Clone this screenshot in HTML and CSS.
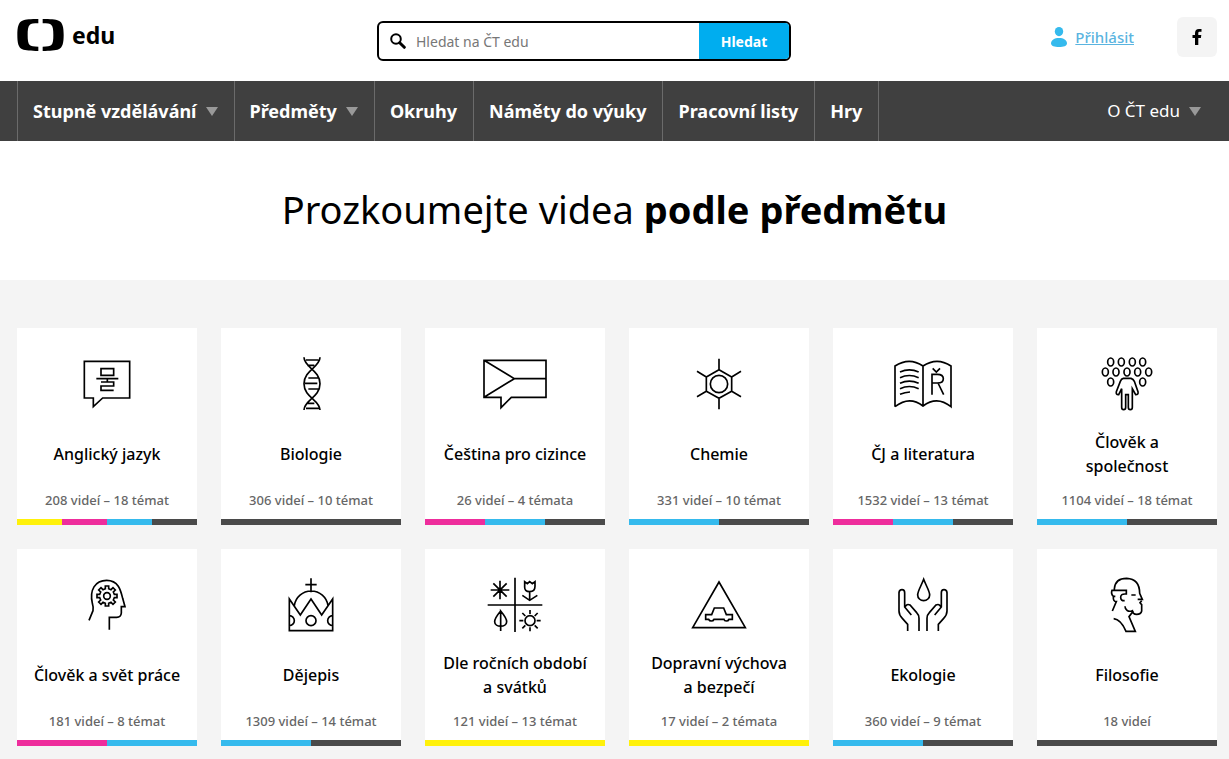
FILE: index.html
```html
<!DOCTYPE html>
<html lang="cs">
<head>
<meta charset="utf-8">
<meta name="viewport" content="width=device-width, initial-scale=1">
<title>ČT edu</title>
<link rel="stylesheet" href="styles.css">
</head>
<body>
<header class="header wrap">
  <a class="logo" href="#">
    <svg class="logo-mark" viewBox="51 57 139 96" aria-hidden="true">
      <path id="bracket" d="M114 57C92 57 75 58 66 62C54 67 51 82 51 105S54 143 66 148C75 152 92 153 114 153V140C100 140 92 139 88 135C83 130 82 120 82 105S83 80 88 75C92 71 100 70 114 70Z"/>
      <use href="#bracket" transform="translate(241 0) scale(-1 1)"/>
    </svg>
    <span>edu</span>
  </a>
  <form class="search" role="search">
    <svg class="search-icon" viewBox="0 0 16 16" aria-hidden="true"><circle cx="6" cy="6" r="4.8" fill="none" stroke="#000" stroke-width="2"/><path d="M9.7 9.7L14.3 14.3" stroke="#000" stroke-width="3" stroke-linecap="round"/></svg>
    <input class="search-input" type="search" placeholder="Hledat na ČT edu" aria-label="Hledat na ČT edu">
    <button class="search-button" type="submit">Hledat</button>
  </form>
  <div class="account">
    <a class="login" href="#">
      <svg class="login-icon" viewBox="0 0 16 20" aria-hidden="true"><ellipse cx="8" cy="4.6" rx="4.2" ry="4.6"/><path d="M8 11C12.500 11 16 13 16 16.500C16 19 12.500 20 8 20S0 19 0 16.500C0 13 3.500 11 8 11Z"/></svg>
      <span>Přihlásit</span>
    </a>
    <a class="facebook" href="#" aria-label="Facebook">
      <svg class="facebook-icon" viewBox="0 0 10 16" aria-hidden="true"><path d="M3 16V9H.5V6H3V4.200C3 1.500 4.400 0 7 0H9.500V2.800H7.800C6.700 2.800 6.300 3.300 6.300 4.200V6H9.300L8.900 9H6.300V16Z"/></svg>
    </a>
  </div>
</header>

<nav class="nav">
  <div class="nav-inner wrap">
    <ul class="menu">
      <li><button class="menu-item" type="button">Stupně vzdělávání<span class="arrow"></span></button></li>
      <li><button class="menu-item" type="button">Předměty<span class="arrow"></span></button></li>
      <li><a class="menu-item" href="#">Okruhy</a></li>
      <li><a class="menu-item" href="#">Náměty do výuky</a></li>
      <li><a class="menu-item" href="#">Pracovní listy</a></li>
      <li><a class="menu-item" href="#">Hry</a></li>
    </ul>
    <button class="menu-item menu-about" type="button">O ČT edu<span class="arrow"></span></button>
  </div>
</nav>

<main>
  <h1 class="title">Prozkoumejte videa <strong>podle předmětu</strong></h1>
  <section class="subjects">
    <div class="grid wrap">
      <a class="card" href="#">
        <svg class="icon" viewBox="201 72 240 240" aria-hidden="true"><path d="M253 124H389V234H308L280 260V234H253ZM303 146H341V166H303ZM289 176H355M322 176V186M303 186H341V198H303V211H341"/></svg>
        <h2 class="name">Anglický jazyk</h2><p class="count">208 videí – 18 témat</p>
        <span class="bar"><i class="yellow"></i><i class="pink"></i><i class="blue"></i><i class="dark"></i></span>
      </a>
      <a class="card" href="#">
        <svg class="icon" viewBox="813 72 240 240" aria-hidden="true"><path d="M912 112C912 142 960 150 960 191S912 240 912 270M960 112C960 142 912 150 912 191S960 240 960 270M918 120H955M922 136H943M925 174H955M915 190H952M925 207H957M920 250H943M918 265H957"/></svg>
        <h2 class="name">Biologie</h2><p class="count">306 videí – 10 témat</p>
        <span class="bar"><i class="dark"></i></span>
      </a>
      <a class="card" href="#">
        <svg class="icon" viewBox="195 72 240 240" aria-hidden="true"><path d="M222 121H408V232H304L273 263V232H222ZL313 176H408M313 176L222 232"/></svg>
        <h2 class="name">Čeština pro cizince</h2><p class="count">26 videí – 4 témata</p>
        <span class="bar"><i class="pink"></i><i class="blue"></i><i class="dark"></i></span>
      </a>
      <a class="card" href="#">
        <svg class="icon" viewBox="807 72 240 240" aria-hidden="true"><path d="M927 149L965 171V214L927 235L889 214V171ZM927 149V116M965 171L993 154M965 214L993 230M927 235V268M889 214L861 230M889 171L861 154"/><circle cx="927" cy="192" r="26"/></svg>
        <h2 class="name">Chemie</h2><p class="count">331 videí – 10 témat</p>
        <span class="bar"><i class="blue"></i><i class="dark"></i></span>
      </a>
      <a class="card" href="#">
        <svg class="icon" viewBox="189 72 240 240" aria-hidden="true"><path d="M225 260V138Q268 110 309 138Q351 110 393 138V260Q351 226 309 258Q268 226 225 260M309 138V258M240 156Q268 143 296 156M240 173Q268 160 296 173M240 190Q268 177 296 190M240 206Q268 193 296 206M240 223Q255 217 270 216M336 224V163H352Q370 163 370 176T352 189H336M354 189L371 224M338 145L349 156L360 145"/></svg>
        <h2 class="name">ČJ a literatura</h2><p class="count">1532 videí – 13 témat</p>
        <span class="bar"><i class="pink"></i><i class="blue"></i><i class="dark"></i></span>
      </a>
      <a class="card" href="#">
        <svg class="icon" viewBox="801 72 240 240" aria-hidden="true"><g><ellipse cx="872" cy="126" rx="9" ry="12"/><ellipse cx="904" cy="126" rx="9" ry="12"/><ellipse cx="937" cy="126" rx="9" ry="12"/><ellipse cx="968" cy="126" rx="9" ry="12"/><ellipse cx="856" cy="156" rx="9" ry="12"/><ellipse cx="888" cy="156" rx="9" ry="12"/><ellipse cx="921" cy="156" rx="9" ry="12"/><ellipse cx="953" cy="156" rx="9" ry="12"/><ellipse cx="986" cy="156" rx="9" ry="12"/><ellipse cx="872" cy="186" rx="9" ry="12"/><ellipse cx="968" cy="186" rx="9" ry="12"/></g><path d="M910 175H933Q940 177 943 184L954 215Q956 224 947 224L937 206V262Q937 269 931 269T925 262V224H917V262Q917 269 911 269T905 262V206L896 224Q887 225 889 215L901 184Q904 176 910 175Z"/></svg>
        <h2 class="name">Člověk a společnost</h2><p class="count">1104 videí – 18 témat</p>
        <span class="bar"><i class="blue"></i><i class="dark"></i></span>
      </a>
      <a class="card" href="#">
        <svg class="icon" viewBox="201 0 240 240" aria-hidden="true"><path d="M267 166L279 137Q281 128 277 115C268 75 285 46 320 46S362 75 368 100L375 125H364V144Q363 157 350 157H328V194"/><g transform="translate(321 93)"><circle r="10"/><path d="M-5 -22V-30H5V-22L12 -19L18 -25L25 -18L19 -12L22 -5H30V5H22L19 12L25 18L18 25L12 19L5 22V30H-5V22L-12 19L-18 25L-25 18L-19 12L-22 5H-30V-5H-22L-19 -12L-25 -18L-18 -25L-12 -19Z"/></g></svg>
        <h2 class="name">Člověk a svět práce</h2><p class="count">181 videí – 8 témat</p>
        <span class="bar"><i class="pink"></i><i class="blue"></i></span>
      </a>
      <a class="card" href="#">
        <svg class="icon" viewBox="813 0 240 240" aria-hidden="true"><path d="M868 197V102L901 150L933 102L965 150L998 102V197ZM883 122A51 51 0 0 1 984 122M933 82V40M916 59H950M868 152A15 15 0 0 1 868 182M998 152A15 15 0 0 0 998 182"/><circle cx="933" cy="167" r="15"/></svg>
        <h2 class="name">Dějepis</h2><p class="count">1309 videí – 14 témat</p>
        <span class="bar"><i class="blue"></i><i class="dark"></i></span>
      </a>
      <a class="card" href="#">
        <svg class="icon" viewBox="195 0 240 240" aria-hidden="true"><path d="M315 38V201M233 120H397M270 47V103M242 75H298M250 55L290 95M290 55L250 95M344 50L352 56L359 50L367 56L375 50V64Q375 80 359 80T344 64ZM359 80V107M337 91L359 106L382 91M272 138C262 150 254 160 254 170C254 188 290 188 290 170C290 160 282 150 272 138V198M360 147V135M360 187V199M340 167H328M380 167H392M346 153L337 144M374 153L383 144M346 181L337 190M374 181L383 190"/><circle cx="360" cy="167" r="15"/><circle cx="270" cy="75" r="4"/></svg>
        <h2 class="name">Dle ročních období a&nbsp;svátků</h2><p class="count">121 videí – 13 témat</p>
        <span class="bar"><i class="yellow"></i></span>
      </a>
      <a class="card" href="#">
        <svg class="icon" viewBox="807 0 240 240" aria-hidden="true"><path d="M927 51L1006 188H848ZM887 163V149H905L913 129H941L949 149H967V163H957Q955 168 949 168T942 163H912Q910 168 904 168T896 163Z"/></svg>
        <h2 class="name">Dopravní výchova a&nbsp;bezpečí</h2><p class="count">17 videí – 2 témata</p>
        <span class="bar"><i class="yellow"></i></span>
      </a>
      <a class="card" href="#">
        <svg class="icon" viewBox="189 0 240 240" aria-hidden="true"><path d="M311 43C304 62 293 78 293 90A18 17 0 0 0 329 90C329 78 318 62 311 43Z"/><path id="hand" d="M263 198V178L247 160Q237 150 237 138V83Q238 74 246 74T254 83V126L274 150M255 126Q260 115 270 120L290 143Q297 150 297 160V198"/><use href="#hand" transform="translate(618 0) scale(-1 1)"/></svg>
        <h2 class="name">Ekologie</h2><p class="count">360 videí – 9 témat</p>
        <span class="bar"><i class="blue"></i><i class="dark"></i></span>
      </a>
      <a class="card" href="#">
        <svg class="icon" viewBox="801 0 240 240" aria-hidden="true"><path d="M883 76V72Q885 40 920 40Q959 42 959 85L967 103H953M965 107L960 113L965 119V138Q963 148 950 148Q938 148 937 137C925 142 915 135 915 124M940 138L927 155L946 199H918C910 180 900 163 881 161M919 89V76H876Q872 87 880 94H886M880 94Q879 110 889 110L877 138M917 87Q902 86 902 97T914 107M934 90H947"/></svg>
        <h2 class="name">Filosofie</h2><p class="count">18 videí</p>
        <span class="bar"><i class="dark"></i></span>
      </a>
    </div>
  </section>
</main>
</body>
</html>
```
FILE: styles.css
```css
* { box-sizing: border-box; }
body {
  margin: 0;
  background: #fff;
  color: #000;
  font-family: "Noto Sans", sans-serif;
}
a { color: inherit; text-decoration: none; }
button, input { font: inherit; }
.wrap { padding-left: 17px; padding-right: 12px; }

.header {
  display: grid;
  grid-template-columns: 30% 414px 1fr;
  height: 81px;
}
.logo {
  display: flex;
  align-items: center;
  align-self: start;
  gap: 8px;
  margin-top: 16px;
  font-size: 23px;
  font-weight: 700;
  line-height: 38px;
}
.logo-mark { width: 47px; height: 32px; }
.search {
  display: flex;
  align-items: center;
  height: 40px;
  margin-top: 21px;
  border: 2px solid #000;
  border-radius: 6px;
  overflow: hidden;
}
.search-icon { width: 16px; height: 16px; margin: 0 10px 0 11px; }
.search-input {
  flex: 1;
  min-width: 0;
  height: 100%;
  padding: 0;
  border: 0;
  outline: 0;
  background: none;
  font-size: 14px;
}
.search-input::placeholder { color: #777; opacity: 1; }
.search-button {
  width: 90px;
  height: 100%;
  padding: 0;
  border: 0;
  background: #00adef;
  color: #fff;
  font-size: 14px;
  font-weight: 700;
}
.account {
  display: flex;
  align-items: center;
  align-self: start;
  justify-content: flex-end;
  gap: 43px;
  margin-top: 17px;
}
.login {
  display: flex;
  align-items: center;
  gap: 8px;
  color: #5ab4e0;
  font-size: 15px;
  font-weight: 500;
  line-height: 22px;
}
.login span { text-decoration: underline; }
.login-icon { width: 16px; height: 20px; fill: #35baed; }
.facebook {
  display: grid;
  place-items: center;
  width: 40px;
  height: 40px;
  border-radius: 6px;
  background: #f4f4f4;
}
.facebook-icon { width: 10px; height: 16px; }

.nav { background: #404040; }
.nav-inner { display: flex; justify-content: space-between; }
.menu {
  display: flex;
  margin: 0;
  padding: 0;
  border-left: 1px solid #6b6b6b;
  list-style: none;
}
.menu li { border-right: 1px solid #6b6b6b; }
.menu-item {
  display: flex;
  align-items: center;
  gap: 9px;
  height: 60px;
  padding: 0 16px 0 15px;
  border: 0;
  background: none;
  color: #fff;
  font-size: 18px;
  font-weight: 700;
  line-height: 24px;
  white-space: nowrap;
}
.menu-about { font-size: 17px; font-weight: 400; }
.arrow {
  border: 6px solid transparent;
  border-top: 9px solid #999;
  border-bottom: 0;
}

.title {
  margin: 0;
  padding: 43px 16px 46px;
  font-size: 38px;
  font-weight: 400;
  line-height: 50px;
  text-align: center;
}
.title strong { font-weight: 700; }

.subjects { padding: 48px 0 13px; background: #f4f4f4; }
.grid {
  display: grid;
  grid-template-columns: repeat(6, minmax(0, 1fr));
  gap: 24px;
}
.card {
  display: flex;
  flex-direction: column;
  align-items: center;
  padding-top: 16px;
  background: #fff;
  text-align: center;
}
.icon {
  width: 80px;
  height: 80px;
  fill: none;
  stroke: #000;
  stroke-width: 5;
}
.name {
  display: grid;
  align-items: center;
  min-height: 48px;
  margin: 6px 0 10px;
  padding: 0 16px;
  font-size: 16px;
  font-weight: 500;
  line-height: 24px;
}
.count {
  margin: 0 0 7px;
  color: #666;
  font-size: 13px;
  font-weight: 500;
  line-height: 24px;
}
.bar { display: flex; align-self: stretch; height: 6px; margin-top: auto; }
.bar i { flex: 1; }
.yellow { background: #fff10a; }
.pink { background: #ee2d9c; }
.blue { background: #35baed; }
.dark { background: #4a4a4a; }
```
